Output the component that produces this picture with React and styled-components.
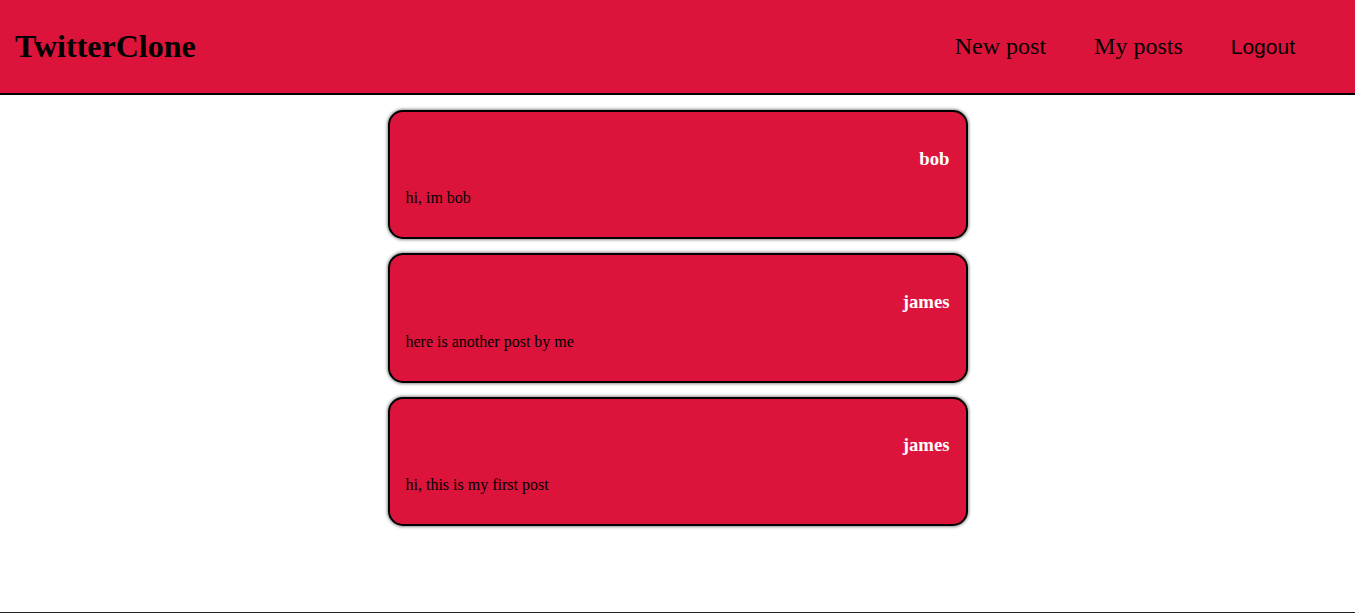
import React from "react";
import styled, { createGlobalStyle } from "styled-components";

const GlobalStyle = createGlobalStyle`
  body {
    margin: 0;
    font-family: "Liberation Serif", "Times New Roman", serif;
    background-color: white;
  }
`;

const Page = styled.div`
  min-height: 100vh;
  display: flex;
  flex-direction: column;
`;

const Header = styled.header`
  height: 93px;
  background-color: crimson;
  border-bottom: 2px solid black;
  display: flex;
  justify-content: space-between;
  align-items: center;
  padding: 0 60px 0 15px;
  h1 {
    margin: 0;
    font-size: 32px;
    font-weight: bold;
    color: black;
  }
`;

const Nav = styled.nav`
  display: flex;
  align-items: center;
  column-gap: 48px;
  a {
    color: black;
    text-decoration: none;
    font-size: 24px;
  }
  button {
    background: none;
    border: none;
    padding: 0;
    color: black;
    font-family: "Liberation Sans", Arial, sans-serif;
    font-size: 21px;
    cursor: pointer;
  }
`;

const Feed = styled.main`
  display: flex;
  flex-direction: column;
  align-items: center;
  row-gap: 14px;
  padding-top: 15px;
`;

const Post = styled.div`
  width: 544px;
  padding: 0 16px;
  background-color: crimson;
  border: 2px solid black;
  border-radius: 15px;
  box-shadow: 0 0 3px 1px rgba(0, 0, 0, 0.45);
  .post__author {
    margin: 35.7px 0 19.7px;
    text-align: right;
    font-size: 18.72px;
    font-weight: bold;
    color: white;
  }
  .post__content {
    margin: 0 0 30px;
    font-size: 16px;
    color: black;
  }
`;

const Footer = styled.footer`
  margin-top: auto;
  height: 1px;
  background-color: #222;
`;

const posts = [
  { id: 1, author: "bob", content: "hi, im bob" },
  { id: 2, author: "james", content: "here is another post by me" },
  { id: 3, author: "james", content: "hi, this is my first post" },
];

export default function App() {
  return (
    <Page>
      <GlobalStyle />
      <Header>
        <h1>TwitterClone</h1>
        <Nav>
          <a href="#new">New post</a>
          <a href="#mine">My posts</a>
          <button>Logout</button>
        </Nav>
      </Header>
      <Feed>
        {posts.map((post) => (
          <Post key={post.id}>
            <h3 className="post__author">{post.author}</h3>
            <p className="post__content">{post.content}</p>
          </Post>
        ))}
      </Feed>
      <Footer />
    </Page>
  );
}
